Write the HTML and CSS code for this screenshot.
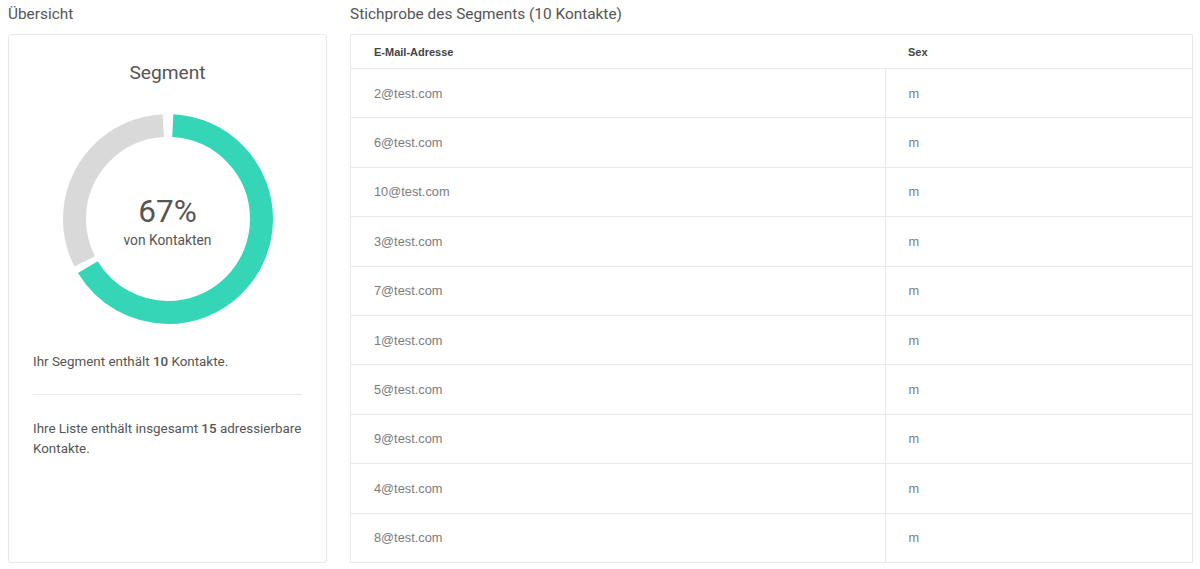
FILE: index.html
```html
<!DOCTYPE html>
<html lang="de">
<head>
    <meta charset="UTF-8">
    <meta name="viewport" content="width=device-width, initial-scale=1.0">
    <title>Segment Übersicht</title>
    <link rel="stylesheet" href="styles.css">
</head>
<body>
    <div class="layout">
        <section class="overview">
            <h2 class="section-title">Übersicht</h2>
            <div class="card">
                <h3 class="card-title">Segment</h3>
                <div class="donut">
                    <svg width="210" height="210" viewBox="0 0 210 210">
                        <circle class="donut-rest" cx="105" cy="105" r="93.5" pathLength="360"
                                stroke-dasharray="114 246" stroke-dashoffset="-243"
                                transform="rotate(-90 105 105)"></circle>
                        <circle class="donut-value" cx="105" cy="105" r="93.5" pathLength="360"
                                stroke-dasharray="236 124" stroke-dashoffset="-3"
                                transform="rotate(-90 105 105)"></circle>
                    </svg>
                    <div class="donut-label">
                        <span class="donut-percent">67%</span>
                        <span class="donut-caption">von Kontakten</span>
                    </div>
                </div>
                <p class="stat">Ihr Segment enthält <b>10</b> Kontakte.</p>
                <hr>
                <p class="stat">Ihre Liste enthält insgesamt <b>15</b> adressierbare Kontakte.</p>
            </div>
        </section>
        <section class="sample">
            <h2 class="section-title">Stichprobe des Segments (10 Kontakte)</h2>
            <div class="sample-box">
                <table>
                    <thead>
                        <tr>
                            <th class="col-email">E-Mail-Adresse</th>
                            <th>Sex</th>
                        </tr>
                    </thead>
                    <tbody>
                        <tr><td>2@test.com</td><td>m</td></tr>
                        <tr><td>6@test.com</td><td>m</td></tr>
                        <tr><td>10@test.com</td><td>m</td></tr>
                        <tr><td>3@test.com</td><td>m</td></tr>
                        <tr><td>7@test.com</td><td>m</td></tr>
                        <tr><td>1@test.com</td><td>m</td></tr>
                        <tr><td>5@test.com</td><td>m</td></tr>
                        <tr><td>9@test.com</td><td>m</td></tr>
                        <tr><td>4@test.com</td><td>m</td></tr>
                        <tr><td>8@test.com</td><td>m</td></tr>
                    </tbody>
                </table>
            </div>
        </section>
    </div>
</body>
</html>
```

FILE: styles.css
```css
body {
    margin: 0;
    padding: 0;
    background-color: #fff;
    font-family: Roboto, "Liberation Sans", Arial, sans-serif;
    color: #555;
}
.layout {
    display: grid;
    grid-template-columns: 319px 843px;
    column-gap: 23px;
    padding: 0 8px;
}
.overview, .sample {
    display: flex;
    flex-direction: column;
}
.section-title {
    margin: 4px 0 10px;
    font-size: 15.4px;
    line-height: 20px;
    font-weight: 400;
    color: #555;
}
.card {
    flex: 1;
    border: 1px solid #e9e9e9;
    border-radius: 3px;
    box-shadow: 0 1px 2px rgba(0, 0, 0, 0.04);
    padding: 26px 24px 0;
}
.card-title {
    margin: 0;
    font-size: 19.2px;
    line-height: 24px;
    font-weight: 400;
    text-align: center;
    color: #555;
}
.donut {
    position: relative;
    width: 210px;
    height: 210px;
    margin: 29px auto 28px;
}
.donut svg {
    display: block;
}
.donut circle {
    fill: none;
    stroke-width: 23;
}
.donut-rest {
    stroke: #d9d9d9;
}
.donut-value {
    stroke: #35d6b7;
}
.donut-label {
    position: absolute;
    inset: 0;
    display: flex;
    flex-direction: column;
    align-items: center;
    justify-content: center;
    padding-top: 6px;
}
.donut-percent {
    font-size: 31.5px;
    line-height: 36px;
    color: #555;
}
.donut-caption {
    font-size: 13.8px;
    line-height: 21px;
    color: #555;
}
.stat {
    margin: 0;
    font-size: 13.4px;
    line-height: 20px;
    color: #555;
}
.stat b {
    font-weight: 500;
}
hr {
    border: none;
    border-top: 1px solid #eaeaea;
    margin: 22px 0 24px;
}
.sample-box {
    flex: 1;
    border: 1px solid #e9e9e9;
    border-bottom: none;
}
table {
    width: 100%;
    border-collapse: collapse;
    font-family: "Liberation Sans", Arial, sans-serif;
}
th {
    height: 33px;
    padding: 0 23px;
    text-align: left;
    font-size: 11px;
    font-weight: 700;
    color: #444;
    border-bottom: 1px solid #e9e9e9;
}
th.col-email {
    width: 488px;
}
td {
    height: 48.4px;
    padding: 0 23px;
    font-size: 12.8px;
    color: #7c7c7c;
    border-bottom: 1px solid #e9e9e9;
}
td:first-child {
    border-right: 1px solid #e9e9e9;
}
```
